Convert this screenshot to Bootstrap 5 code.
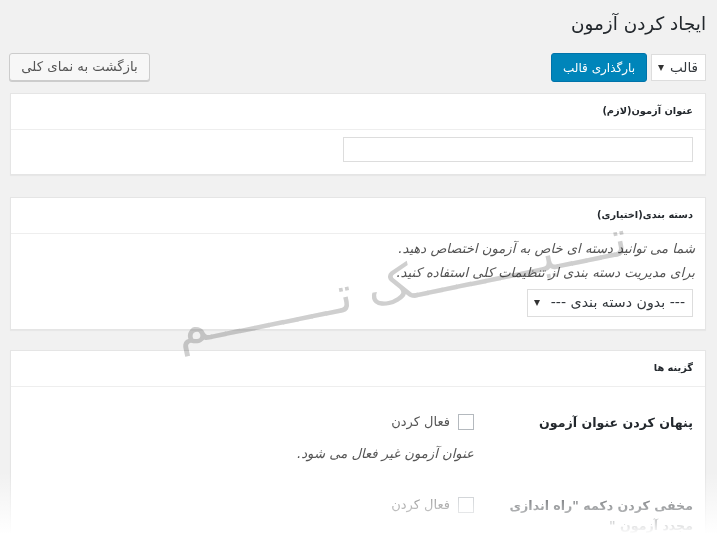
<!DOCTYPE html>
<html lang="fa" dir="rtl">
  <head>
    <meta charset="UTF-8" />
    <meta name="viewport" content="width=device-width, initial-scale=1" />
    <title>ایجاد کردن آزمون</title>
    <link
      rel="stylesheet"
      href="https://cdn.jsdelivr.net/npm/bootstrap@5.3.0/dist/css/bootstrap.min.css"
    />
    <style>
      html, body { height: 537px; overflow: hidden; }
      body {
        background: #f1f1f1;
        color: #23282d;
        font-family: "DejaVu Sans", sans-serif;
        font-size: 12px;
      }
      .page-wrap { padding: 10px 11px 0 10px; position: relative; }
      .page-title { font-size: 18.4px; font-weight: 400; line-height: 28px; margin: 0 0 15px; }
      .tool-bar { height: 29px; margin-bottom: 11px; }
      .tpl-select.form-select,
      .cat-select.form-select {
        border-radius: 0;
        border: 1px solid #ddd;
        box-shadow: none;
        color: #32373c;
        background-image: none;
        padding: 0 7px 0 0;
        text-align: right;
      }
      .select-box { position: relative; }
      .select-box::after {
        content: "";
        position: absolute;
        left: 7px;
        top: 50%;
        margin-top: -3px;
        border: 3px solid transparent;
        border-top: 6px solid #333;
        border-bottom: 0;
      }
      .tpl-select.form-select { width: 55px; height: 27px; font-size: 13.5px; }
      .cat-select.form-select { width: 166px; height: 28px; font-size: 14.2px; }
      .btn-load {
        background: #0085ba;
        border: 1px solid #0073aa;
        border-radius: 3px;
        color: #fff;
        font-size: 12px;
        width: 96px;
        height: 29px;
        padding: 0;
      }
      .btn-back {
        background: #f7f7f7;
        border: 1px solid #ccc;
        border-radius: 3px;
        box-shadow: 0 1px 0 #ccc;
        color: #555;
        font-size: 13.3px;
        width: 141px;
        height: 28px;
        padding: 0;
        margin-left: -1px;
      }
      .box-card { border: 1px solid #e5e5e5; border-radius: 0; box-shadow: 0 1px 1px rgba(0,0,0,.04); }
      .box-card .card-header {
        background: #fff;
        border-bottom: 1px solid #eee;
        border-radius: 0;
        font-size: 9.8px;
        font-weight: 700;
        height: 36px;
        line-height: 34px;
        padding: 0 12px;
      }
      .first-card { margin-bottom: 22px; }
      .second-card { margin-bottom: 20px; }
      .input-body { padding: 7px 12px 12px; }
      .title-input.form-control {
        border: 1px solid #ddd;
        border-radius: 0;
        height: 25px;
        width: 350px;
      }
      .cat-body { padding: 3px 10px 12px; }
      .cat-body .select-box { margin-top: 4px; margin-right: 2px; }
      .hint-text { color: #555; font-style: italic; font-size: 13.2px; line-height: 24px; margin: 0; }
      .opt-body { padding: 25px 12px 0; }
      .opt-row { height: 83px; }
      .opt-label { width: 219px; padding: 1px 0 0 20px; font-size: 12.6px; font-weight: 700; line-height: 20px; flex-shrink: 0; }
      .opt-check {
        appearance: none;
        background: #fff;
        border: 1px solid #b4b9be;
        height: 16px;
        width: 16px;
        margin: 0 0 0 8px;
      }
      .opt-field { font-size: 13px; color: #555; }
      .desc-text { margin-top: 10px; }
      .stamp {
        position: absolute;
        left: 176px;
        top: 304px;
        color: #cfcfcf;
        font-size: 50px;
        line-height: 1;
        white-space: nowrap;
        transform: rotate(-11.5deg);
        transform-origin: left center;
        mix-blend-mode: multiply;
        pointer-events: none;
      }
      .bottom-fade {
        position: absolute;
        left: 0;
        right: 0;
        top: 472px;
        height: 62px;
        background: linear-gradient(to bottom, rgba(255,255,255,0), #fff);
        pointer-events: none;
      }
      .bottom-rest { position: absolute; left: 0; right: 0; top: 534px; height: 3px; background: #fff; }
    </style>
  </head>
  <body>
    <div class="page-wrap">
      <h1 class="page-title">ایجاد کردن آزمون</h1>

      <div class="tool-bar d-flex align-items-center justify-content-between">
        <div class="d-flex align-items-center gap-1">
          <div class="select-box">
            <select class="form-select tpl-select"><option>قالب</option></select>
          </div>
          <button type="button" class="btn btn-load">بارگذاری قالب</button>
        </div>
        <button type="button" class="btn btn-back align-self-start">بازگشت به نمای کلی</button>
      </div>

      <!-- عنوان -->
      <div class="card box-card first-card">
        <div class="card-header">عنوان آزمون(لازم)</div>
        <div class="card-body input-body">
          <input type="text" class="form-control title-input" />
        </div>
      </div>

      <!-- دسته بندی -->
      <div class="card box-card second-card">
        <div class="card-header">دسته بندی(اختیاری)</div>
        <div class="card-body cat-body">
          <p class="hint-text">شما می توانید دسته ای خاص به آزمون اختصاص دهید.</p>
          <p class="hint-text">برای مدیریت دسته بندی از تنظیمات کلی استفاده کنید.</p>
          <div class="select-box d-inline-block">
            <select class="form-select cat-select"><option>--- بدون دسته بندی ---</option></select>
          </div>
        </div>
      </div>

      <!-- گزینه ها -->
      <div class="card box-card">
        <div class="card-header">گزینه ها</div>
        <div class="card-body opt-body">
          <div class="opt-row d-flex">
            <div class="opt-label">پنهان کردن عنوان آزمون</div>
            <div class="opt-field">
              <label class="d-flex align-items-center"><input type="checkbox" class="opt-check" />فعال کردن</label>
              <p class="hint-text desc-text">عنوان آزمون غیر فعال می شود.</p>
            </div>
          </div>
          <div class="opt-row d-flex">
            <div class="opt-label">مخفی کردن دکمه "راه اندازی مجدد آزمون "</div>
            <div class="opt-field">
              <label class="d-flex align-items-center"><input type="checkbox" class="opt-check" />فعال کردن</label>
            </div>
          </div>
        </div>
      </div>
    </div>
    <div class="stamp">تــــیـــــــــک تـــــــــم</div>
    <div class="bottom-fade"></div>
    <div class="bottom-rest"></div>

    <script src="https://cdn.jsdelivr.net/npm/bootstrap@5.3.0/dist/js/bootstrap.bundle.min.js"></script>
  </body>
</html>
